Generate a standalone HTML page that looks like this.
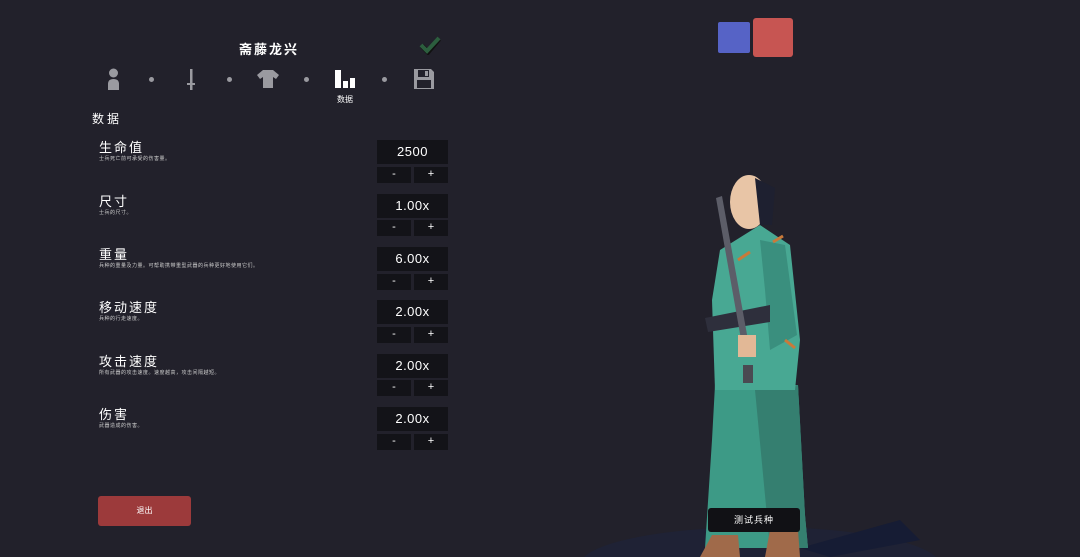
<!DOCTYPE html>
<html><head><meta charset="utf-8"><style>
*{margin:0;padding:0;box-sizing:border-box}
html,body{width:1080px;height:557px;overflow:hidden}
body{background:#22212b;font-family:"Liberation Sans","Noto Sans CJK SC",sans-serif;color:#fff;position:relative}
.a{position:absolute}
.t{font-size:13px;letter-spacing:2px;left:99px}
.d{font-size:5px;color:#ccc;left:99px;letter-spacing:.5px}
.v{left:377px;width:71px;height:24px;background:#131318;font-size:13px;text-align:center;line-height:24px;letter-spacing:.5px}
.b{width:34px;height:16px;background:#131318;font-size:11px;text-align:center;line-height:15px}
.dot{width:5px;height:5px;border-radius:50%;background:#9a9aa0;top:77px}
</style></head><body>
<svg class="a" style="left:0;top:0" width="1080" height="557">
<ellipse cx="760" cy="565" rx="180" ry="38" fill="#1c2440" opacity=".5"/>
<polygon points="800,548 900,520 920,540 830,557" fill="#161c34"/>
<polygon points="705,548 808,548 805,515 798,385 715,385 712,440" fill="#3d9a86"/>
<polygon points="755,390 798,385 805,515 808,548 770,548" fill="#357f70"/>
<polygon points="700,557 740,557 738,535 712,535" fill="#a06a4a"/>
<polygon points="765,557 800,557 798,530 770,530" fill="#a06a4a"/>
<polygon points="720,250 760,225 790,245 800,340 795,390 715,390 712,300" fill="#48a893"/>
<polygon points="760,240 785,245 797,335 770,350 765,290" fill="#3a8f7e"/>
<polygon points="705,318 770,305 770,322 708,332" fill="#2e2f3c"/>
<ellipse cx="749" cy="202" rx="19" ry="27" fill="#e8c5a6"/>
<polygon points="755,178 775,188 772,225 760,225" fill="#1e2030"/>
<polygon points="716,198 722,196 748,340 742,345" fill="#5c5d68"/>
<rect x="738" y="335" width="18" height="22" fill="#e2b896"/>
<rect x="743" y="365" width="10" height="18" fill="#4a4a52"/>
<path d="M738 260l12-8M783 236l-10 6M785 340l10 8" stroke="#c97a3a" stroke-width="3"/>
</svg>
<div class="a" style="left:718px;top:22px;width:32px;height:31px;background:#5663c6;border-radius:2px"></div>
<div class="a" style="left:753px;top:18px;width:40px;height:39px;background:#c75552;border-radius:3px"></div>
<div class="a" style="left:708px;top:508px;width:92px;height:24px;background:#111115;border-radius:3px;font-size:9px;text-align:center;line-height:24px;letter-spacing:1px">测试兵种</div>

<div class="a" style="left:239px;top:39px;font-size:13px;font-weight:bold;letter-spacing:2px">斋藤龙兴</div>
<svg class="a" style="left:418px;top:35px" width="24" height="20"><path d="M4 11l6 6L21 4" stroke="#111" stroke-width="5" fill="none"/><path d="M3 10l6 6L21 3" stroke="#2c5e3e" stroke-width="4" fill="none"/></svg>
<svg class="a" style="left:105px;top:68px" width="17" height="23"><circle cx="8.5" cy="5" r="4.5" fill="#9a9aa0"/><path d="M3 22v-6q0-5 5.5-5t5.5 5v6z" fill="#9a9aa0"/></svg>
<div class="a dot" style="left:149px"></div>
<svg class="a" style="left:185px;top:68px" width="12" height="24"><rect x="5" y="1" width="2.5" height="15" fill="#9a9aa0"/><rect x="2" y="15" width="8" height="2" fill="#9a9aa0"/><rect x="5" y="17" width="2.5" height="5" fill="#9a9aa0"/></svg>
<div class="a dot" style="left:227px"></div>
<svg class="a" style="left:256px;top:69px" width="24" height="21"><path d="M7 1h10l6 5-3 4-3-2v11H7V8l-3 2-3-4z" fill="#9a9aa0"/></svg>
<div class="a dot" style="left:304px"></div>
<svg class="a" style="left:334px;top:69px" width="24" height="20"><rect x="1" y="1" width="6" height="18" fill="#fff"/><rect x="9" y="12" width="5" height="7" fill="#fff"/><rect x="16" y="9" width="5" height="10" fill="#fff"/></svg>
<div class="a" style="left:337px;top:94px;font-size:8px">数据</div>
<div class="a dot" style="left:382px"></div>
<svg class="a" style="left:413px;top:68px" width="22" height="22"><path d="M1 1h17l3 3v17H1z" fill="#9a9aa0"/><rect x="5" y="2" width="11" height="7" fill="#22212b"/><rect x="12" y="3" width="3" height="5" fill="#9a9aa0"/><rect x="4" y="12" width="14" height="8" fill="#22212b"/></svg>

<div class="a" style="left:92px;top:110px;font-size:12px;letter-spacing:3px">数据</div>

<div class="a t" style="top:137px">生命值</div><div class="a d" style="top:155px">士兵死亡前可承受的伤害量。</div>
<div class="a v" style="top:140px">2500</div><div class="a b" style="left:377px;top:167px">-</div><div class="a b" style="left:414px;top:167px">+</div>

<div class="a t" style="top:191px">尺寸</div><div class="a d" style="top:209px">士兵的尺寸。</div>
<div class="a v" style="top:194px">1.00x</div><div class="a b" style="left:377px;top:220px">-</div><div class="a b" style="left:414px;top:220px">+</div>

<div class="a t" style="top:244px">重量</div><div class="a d" style="top:262px">兵种的重量及力量。可帮助携带重型武器的兵种更好地使用它们。</div>
<div class="a v" style="top:247px">6.00x</div><div class="a b" style="left:377px;top:274px">-</div><div class="a b" style="left:414px;top:274px">+</div>

<div class="a t" style="top:297px">移动速度</div><div class="a d" style="top:315px">兵种的行走速度。</div>
<div class="a v" style="top:300px">2.00x</div><div class="a b" style="left:377px;top:327px">-</div><div class="a b" style="left:414px;top:327px">+</div>

<div class="a t" style="top:351px">攻击速度</div><div class="a d" style="top:369px">所有武器的攻击速度。速度越高，攻击间隔越短。</div>
<div class="a v" style="top:354px">2.00x</div><div class="a b" style="left:377px;top:380px">-</div><div class="a b" style="left:414px;top:380px">+</div>

<div class="a t" style="top:404px">伤害</div><div class="a d" style="top:422px">武器造成的伤害。</div>
<div class="a v" style="top:407px">2.00x</div><div class="a b" style="left:377px;top:434px">-</div><div class="a b" style="left:414px;top:434px">+</div>

<div class="a" style="left:98px;top:496px;width:93px;height:30px;background:#9c3a3b;border-radius:3px;font-size:8px;text-align:center;line-height:30px">退出</div>
</body></html>
